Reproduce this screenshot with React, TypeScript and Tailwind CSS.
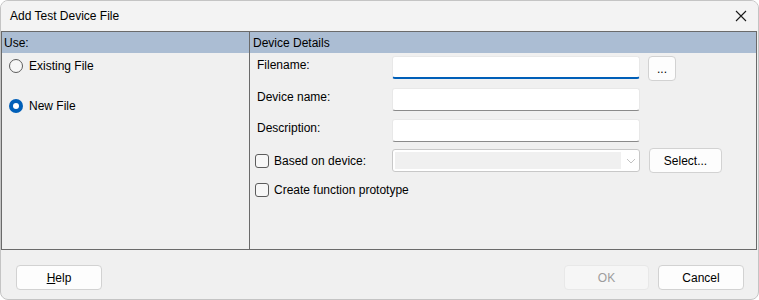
import React from 'react';

const font = { fontFamily: '"Segoe UI", "Liberation Sans", Arial, sans-serif' };

const Radio = ({ checked, label }: { checked?: boolean; label: string }) => (
  <label className="flex items-center gap-[6px] text-[12px] text-black">
    {checked ? (
      <span className="w-[14px] h-[14px] rounded-full bg-[#005fb8] flex items-center justify-center">
        <span className="w-[6px] h-[6px] rounded-full bg-white" />
      </span>
    ) : (
      <span className="w-[14px] h-[14px] rounded-full border border-[#5c5c5c] bg-[#f7f7f7]" />
    )}
    <span>{label}</span>
  </label>
);

const Checkbox = ({ label }: { label: string }) => (
  <label className="flex items-center gap-[5px] text-[12px] text-black">
    <span className="w-[14px] h-[14px] rounded-[3px] border border-[#5c5c5c] bg-[#f7f7f7]" />
    <span>{label}</span>
  </label>
);

const TextBox = ({ focused }: { focused?: boolean }) => (
  <div
    className={`w-[248px] h-[23px] bg-white rounded-[3px] border border-[#e8e8e8] ${
      focused ? 'border-b-2 border-b-[#005fb8]' : 'border-b-[#8a8a8a]'
    }`}
  />
);

const Button = ({ children, className = '', disabled }: { children: React.ReactNode; className?: string; disabled?: boolean }) => (
  <button
    disabled={disabled}
    className={`h-[25px] rounded-[4px] border text-[12px] flex items-center justify-center ${
      disabled ? 'border-[#e8e8e8] bg-[#f6f6f6] text-[#9d9d9d]' : 'border-[#d2d2d2] bg-[#fdfdfd] text-black'
    } ${className}`}
  >
    {children}
  </button>
);

const App: React.FC = () => {
  return (
    <div className="w-[759px] h-[300px] bg-white" style={font}>
      <div className="w-[759px] h-[300px] rounded-[8px] border border-[#c4c4c4] bg-[#f0f0f0] flex flex-col overflow-hidden">
        {/* title bar */}
        <div className="h-[30px] bg-[#f3f3f3] flex items-center justify-between pl-[9px] pr-[10px]">
          <span className="text-[12px] text-black">Add Test Device File</span>
          <svg width="12" height="12" viewBox="0 0 12 12" className="mr-[1px]">
            <path d="M1 1 L11 11 M11 1 L1 11" stroke="#1a1a1a" strokeWidth="1.1" />
          </svg>
        </div>

        {/* table */}
        <div className="ml-0 mr-[1px] h-[219px] border border-[#6a6a6a] grid grid-cols-[248px_1fr]">
          {/* left column */}
          <div className="border-r border-[#6a6a6a] flex flex-col">
            <div className="h-[21px] bg-[#abbdd3] pl-[2px] flex items-center text-[12px] text-black">Use:</div>
            <div className="pl-[7px] pt-[4px] flex flex-col gap-[22px]">
              <Radio label="Existing File" />
              <Radio checked label="New File" />
            </div>
          </div>

          {/* right column */}
          <div className="flex flex-col">
            <div className="h-[21px] bg-[#abbdd3] pl-[3px] flex items-center text-[12px] text-black">Device Details</div>
            <div className="pl-[5px] pt-[3px] flex flex-col text-[12px] text-black">
              <div className="flex items-start h-[32px]">
                <span className="w-[137px] pl-[2px]">Filename:</span>
                <TextBox focused />
                <Button className="ml-[8px] w-[28px] h-[23px]">...</Button>
              </div>
              <div className="flex items-start h-[31px]">
                <span className="w-[137px] pl-[2px]">Device name:</span>
                <TextBox />
              </div>
              <div className="flex items-start h-[30px]">
                <span className="w-[137px] pl-[2px]">Description:</span>
                <TextBox />
              </div>
              <div className="flex items-center h-[23px]">
                <div className="w-[137px]">
                  <Checkbox label="Based on device:" />
                </div>
                <div className="w-[248px] h-[23px] rounded-[3px] border border-[#c8c8c8] bg-white p-[2px] flex items-center">
                  <div className="w-[226px] h-full bg-[#f0f0f0]" />
                  <svg width="10" height="6" viewBox="0 0 10 6" className="ml-[5px]">
                    <path d="M1 1 L5 5 L9 1" fill="none" stroke="#c2c2c2" strokeWidth="1" />
                  </svg>
                </div>
                <Button className="ml-[9px] w-[73px] h-[22px]">Select...</Button>
              </div>
              <div className="mt-[9px]">
                <Checkbox label="Create function prototype" />
              </div>
            </div>
          </div>
        </div>

        {/* footer */}
        <div className="flex items-center justify-between pl-[15px] pr-[14px] pt-[15px]">
          <Button className="w-[86px]">
            <span>
              <span className="underline">H</span>elp
            </span>
          </Button>
          <div className="flex gap-[9px]">
            <Button disabled className="w-[85px]">OK</Button>
            <Button className="w-[86px]">Cancel</Button>
          </div>
        </div>
      </div>
    </div>
  );
};

export default App;
